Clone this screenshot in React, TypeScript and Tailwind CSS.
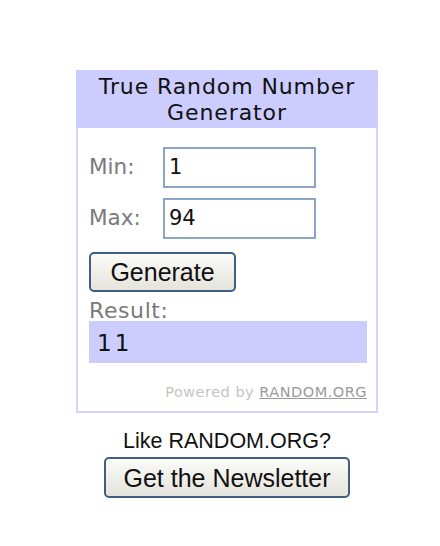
export default function App() {
  return (
    <div className="min-h-[546px] w-[440px] bg-white pt-[70px] pl-[76px]">
      <div className="w-[302px] font-['DejaVu_Sans',Tahoma,sans-serif]">
        <div className="h-[58px] bg-[#ccccff] flex flex-col items-center justify-center text-[22px] leading-[26px] pt-[2px] text-[#111] tracking-[0.9px]">
          <div>True Random Number</div>
          <div>Generator</div>
        </div>
        <div className="border-x-2 border-b-2 border-[#d4d4fb] pl-[11px] pr-[9px] pt-[19px] pb-[10px]">
          <Field label="Min:" value="1" />
          <div className="h-[10px]" />
          <Field label="Max:" value="94" />
          <button className="mt-[13px] h-[40px] w-[147px] rounded-[5px] border-2 border-[#3f5f80] bg-gradient-to-b from-[#fbfbf8] to-[#e4e3dc] text-[25px] leading-[28px] font-['Liberation_Sans',Arial,sans-serif] text-[#111]">
            Generate
          </button>
          <div className="mt-[8px] h-[21px] text-[22px] leading-[21px] tracking-[0.6px] text-[#7a7a7a]">
            Result:
          </div>
          <div className="h-[42px] bg-[#ccccff] pl-[8px] pt-[2px] flex items-center text-[23px] tracking-[3px] text-[#111]">
            11
          </div>
          <div className="mt-[20px] text-right text-[14.5px] leading-[18px] text-[#c4c4c4] tracking-[0.5px]">
            Powered by{" "}
            <span className="underline text-[#9a9a9a]">RANDOM.ORG</span>
          </div>
        </div>
      </div>
      <div className="w-[302px] flex flex-col items-center font-['Liberation_Sans',Arial,sans-serif] text-[#111]">
        <div className="mt-[16px] text-[21.5px] leading-[24px]">
          Like RANDOM.ORG?
        </div>
        <button className="mt-[4px] h-[41px] w-[246px] rounded-[5px] border-2 border-[#3f5f80] bg-gradient-to-b from-[#fbfbf8] to-[#e4e3dc] text-[25px] leading-[28px]">
          Get the Newsletter
        </button>
      </div>
    </div>
  );
}

function Field({ label = "", value = "" }) {
  return (
    <div className="flex items-center">
      <div className="w-[74px] text-[21.5px] text-[#7a7a7a]">{label}</div>
      <div className="h-[41px] w-[153px] border-2 border-[#8ba6c4] flex items-center pl-[4px] text-[21px] text-[#111]">
        {value}
      </div>
    </div>
  );
}
